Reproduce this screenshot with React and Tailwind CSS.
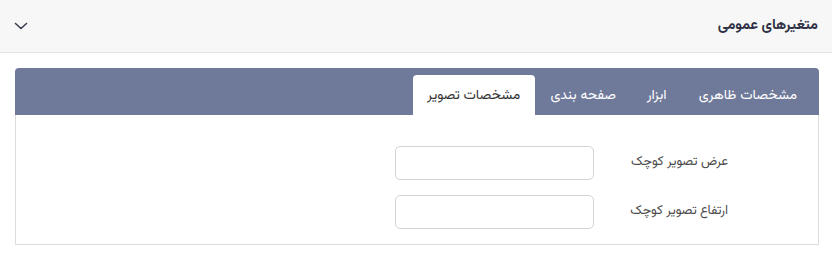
import React, { useState } from 'react';

const tabs = [
  { label: 'مشخصات ظاهری', w: 'px-[17px]' },
  { label: 'ابزار', w: 'w-[50px]' },
  { label: 'صفحه بندی', w: 'w-[97px]' },
  { label: 'مشخصات تصویر', w: 'w-[122px]' },
];

const fields = ['عرض تصویر کوچک', 'ارتفاع تصویر کوچک'];

const App = () => {
  const [active, setActive] = useState(3);

  return (
    <div
      dir="rtl"
      className="w-[832px] h-[258px] bg-white text-[#333]"
      style={{ fontFamily: '"Vazirmatn", "Noto Sans Arabic", "DejaVu Sans", sans-serif' }}
    >
      {/* header */}
      <div className="flex items-center justify-between h-[53px] bg-[#f7f7f7] border-b border-[#e2e2e2] pr-[14px] pl-[13px]">
        <h2 className="text-[14.5px] font-bold text-[#2f3145]">متغیرهای عمومی</h2>
        <svg width="16" height="16" viewBox="0 0 16 16" fill="none" stroke="#3a3d52" strokeWidth="1.6" strokeLinecap="round" strokeLinejoin="round">
          <path d="M2.5 5.5 L8 10.5 L13.5 5.5" />
        </svg>
      </div>

      {/* tabs card */}
      <div className="pt-[15px] pr-[13px] pl-[15px]">
        <div className="border border-[#dcdcdc] rounded-t-[5px]">
          <div className="flex items-end h-[47px] bg-[#6f7a9b] rounded-t-[4px] pr-[5px] -mx-px -mt-px">
            {tabs.map((t, i) => (
              <button
                key={t.label}
                onClick={() => setActive(i)}
                className={
                  i === active
                    ? `h-[40px] pt-[2px] ${t.w} text-center bg-white text-[#333] rounded-t-[4px] text-[14px]`
                    : `h-[40px] pt-[2px] ${t.w} text-center text-white text-[14px]`
                }
              >
                {t.label}
              </button>
            ))}
          </div>
          <div className="flex flex-col gap-[15px] pt-[31px] pb-[15px]">
            {fields.map((f) => (
              <div key={f} className="flex items-center">
                <label className="w-[224px] pr-[90px] text-[13px] text-[#4a4a4a]">{f}</label>
                <input className="w-[199px] h-[34px] border border-[#d4d4d4] rounded-[5px] px-2 outline-none" />
              </div>
            ))}
          </div>
        </div>
      </div>
    </div>
  );
};

export default App;
